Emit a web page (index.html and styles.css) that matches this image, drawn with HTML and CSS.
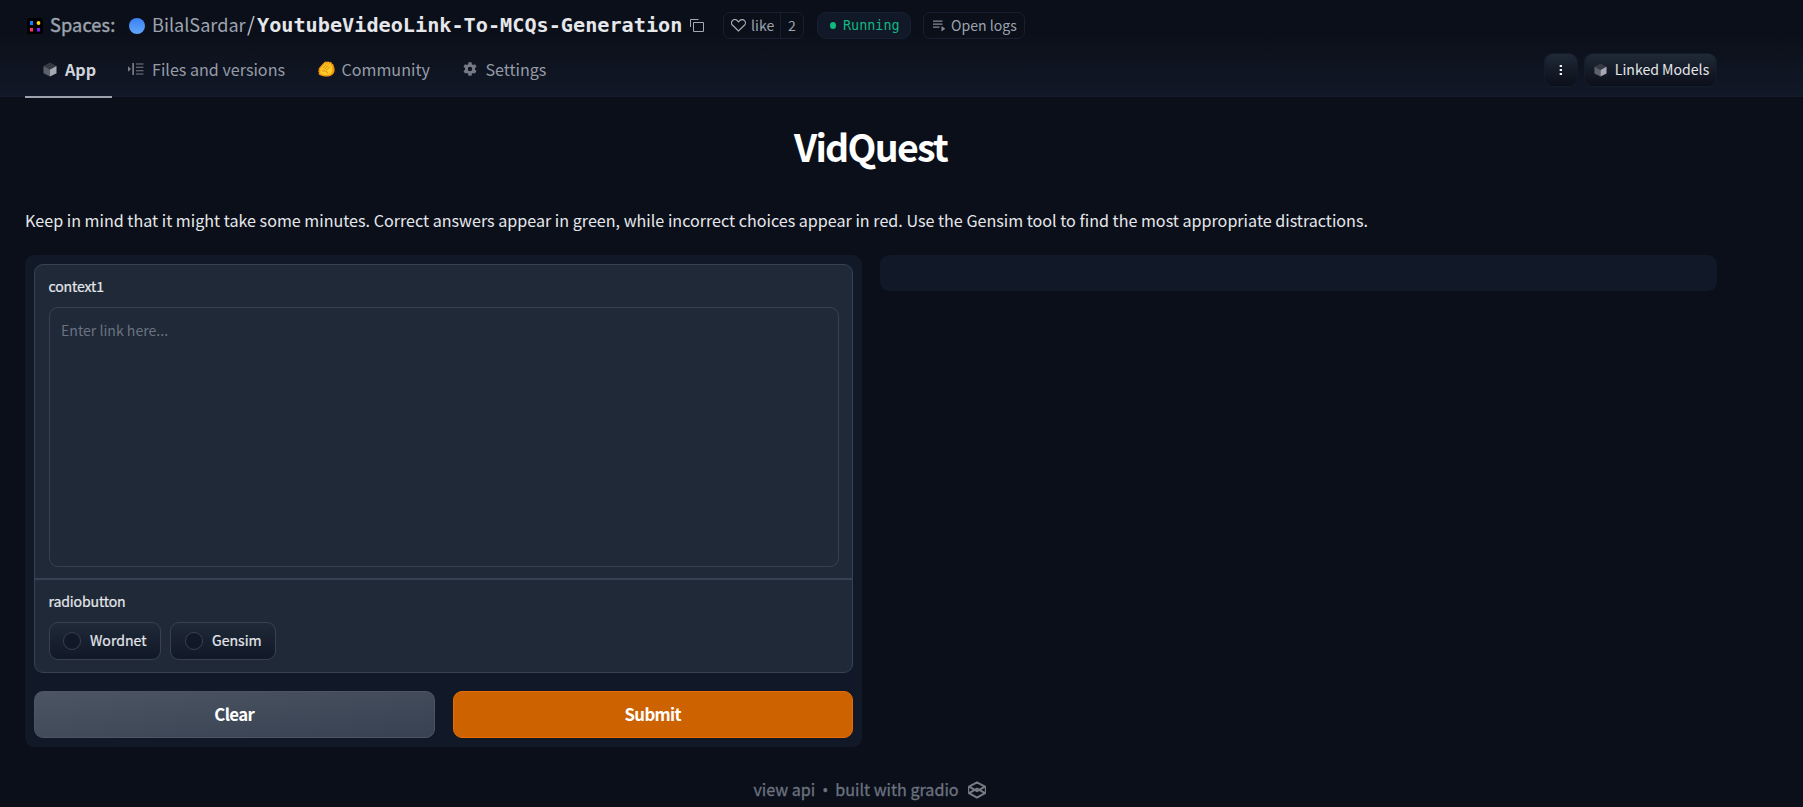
FILE: index.html
```
<!DOCTYPE html>
<html lang="en">
<head>
<meta charset="utf-8">
<title>VidQuest</title>
<link rel="stylesheet" href="styles.css">
</head>
<body>
<svg width="0" height="0" class="defs">
  <symbol id="cube" viewBox="0 0 14 15">
    <path fill="#353943" d="M7 .5 13.5 4 7 7.4.5 4z"/>
    <path fill="#5d616b" d="M.5 4 7 7.4v7.1L.5 11.2z"/>
    <path fill="#a5a9b2" d="M13.5 4 7 7.4v7.1l6.500-3.300z"/>
  </symbol>
</svg>
<header class="header">
  <div class="title-row">
    <svg class="spaces-icon" viewBox="0 0 16 16"><rect width="16" height="16" rx="2.500" fill="#000"/><rect x="3" y="3" width="3" height="4" fill="#0a84ff"/><circle cx="11.500" cy="5" r="1.900" fill="#ffd21e"/><rect x="3" y="10" width="3" height="3.500" fill="#ff3270"/><rect x="10" y="10" width="3" height="3.500" fill="#861fff"/></svg>
    <span class="spaces">Spaces:</span>
    <span class="avatar"></span>
    <span class="owner">BilalSardar</span>
    <span class="slash">/</span>
    <h1 class="repo">YoutubeVideoLink-To-MCQs-Generation</h1>
    <svg class="copy-icon" viewBox="0 0 14 14" fill="none" stroke="#a3a8b2"><path d="M3.500 3.500h10v9h-10z"/><path d="M.5 8V.5H8.500"/></svg>
    <div class="like"><span class="like-main"><svg class="heart" viewBox="0 0 15 13" fill="none" stroke="#a3a8b2" stroke-width="1.200"><path d="M7.500 12 1.600 6.300A3.300 3.300 0 0 1 6.200 1.500L7.500 2.800 8.800 1.500a3.300 3.300 0 0 1 4.600 4.800z"/></svg><span class="lift">like</span></span><span class="like-count lift">2</span></div>
    <div class="running"><span class="dot"></span>Running</div>
    <div class="logs"><svg class="logs-icon" viewBox="0 0 13 12" fill="#858a95"><path d="M0 .5h9.500v1.300H0zM0 3.500h9.500v1.200H0zM0 6.500h6.500v1.200H0zM8.500 6 12.300 8.800 8.500 11.500z"/></svg><span class="lift">Open logs</span></div>
  </div>
  <div class="nav-row">
    <nav class="tabs">
      <a class="tab active"><svg class="cube" viewBox="0 0 14 15"><use href="#cube"/></svg><span>App</span></a>
      <a class="tab files"><svg class="files-icon" viewBox="0 0 16 12" fill="#777c87"><path d="M0 3.300 3 6 0 8.700z"/><path fill="#a3a8b2" d="M4.500 0h1.200v12H4.500z"/><path d="M8 .5h7.500v1H8zM8 3.800h7.500v1H8zM8 7.200h7.500v1H8zM8 10.500h7.500v1H8z"/></svg><span>Files and versions</span></a>
      <a class="tab community"><svg class="hand" viewBox="0 0 17 16"><path fill="#f0930c" d="M2.300 5.400 6.200 1.300C7 .4 8.200.3 8.900.9 9.700.1 11 .3 11.600 1.200c1.200-.4 2.300.3 2.500 1.500 1.300.3 1.900 1.300 1.600 2.600 1.100 1.600 1.200 4 .6 5.800-.9 2.700-3.200 4-6 4.300-3.500.3-6.800-.2-9-1.700-.9-.7-.8-1.500-.2-2C0 11 0 9.900.7 9.400.2 8.100 1 6.700 2.300 5.400z"/><path fill="#ffc928" d="M3.200 6.300 6.700 2.500c.9-.9 2-.3 1.500.8l1.600-1.500c.9-.7 1.800 0 1.200 1l-1 1.500 2-1.500c.9-.5 1.600.3 1 1.100L11.600 5.800l1.800-1.100c.9-.4 1.500.4.9 1.200-.8 1.200.5 2.600.1 4.400-.6 2.500-2.200 3.600-4.800 3.800-2.600.2-5.300-.1-7.300-1.300-.5-.4 0-.8.600-.9-1-.6-1.300-1.300-.2-1.600-.9-1.300-.5-2.900.5-4z"/><path fill="none" stroke="#dd850f" stroke-width="1" stroke-linecap="round" d="M8 3.500 5 6.800M9.900 4.500 6.700 8M11.600 5.900 8.700 8.900M4.500 10c2.500-.8 4.500 0 5 2"/></svg><span>Community</span></a>
      <a class="tab settings"><svg class="gear" viewBox="0 0 14 14"><path fill="#747985" fill-rule="evenodd" d="M5.500.3h3l.4 1.900 1.200.7 1.900-.7 1.500 2.600-1.500 1.300v1.600l1.500 1.300-1.500 2.600-1.900-.6-1.200.7-.4 2h-3l-.4-2-1.200-.7-1.900.6L.5 9l1.500-1.300V6.100L.5 4.800 2 2.200l1.900.7 1.200-.7zM7 4.800a2.200 2.200 0 1 0 0 4.400 2.200 2.200 0 0 0 0-4.400z"/></svg><span>Settings</span></a>
    </nav>
    <div class="actions">
      <button class="btn-menu"><svg class="kebab" viewBox="0 0 4 12" fill="#f3f4f6"><rect x=".7" y="1" width="2.300" height="2"/><rect x=".7" y="5" width="2.300" height="2"/><rect x=".7" y="9" width="2.300" height="2"/></svg></button>
      <button class="btn-linked"><svg class="cube-sm" viewBox="0 0 14 15"><use href="#cube"/></svg><span class="lift">Linked Models</span></button>
    </div>
  </div>
</header>
<main class="main">
  <h2 class="heading">VidQuest</h2>
  <p class="intro">Keep in mind that it might take some minutes. Correct answers appear in green, while incorrect choices appear in red. Use the Gensim tool to find the most appropriate distractions.</p>
  <div class="columns">
    <section class="panel">
      <div class="form">
        <div class="block context">
          <label class="label" for="link">context1</label>
          <textarea class="input" id="link" placeholder="Enter link here..."></textarea>
        </div>
        <div class="block radios">
          <span class="label">radiobutton</span>
          <div class="options">
            <label class="option"><span class="radio"></span><span class="lift">Wordnet</span></label>
            <label class="option gensim"><span class="radio"></span><span class="lift">Gensim</span></label>
          </div>
        </div>
      </div>
      <div class="buttons">
        <button class="button clear"><span class="lift">Clear</span></button>
        <button class="button submit"><span class="lift">Submit</span></button>
      </div>
    </section>
    <section class="panel output"></section>
  </div>
  <footer class="footer"><span class="lift">view api</span><span class="sep">•</span><span class="lift">built with gradio</span><svg class="gradio" viewBox="0 0 20 18" fill="none" stroke="#777b84" stroke-width="2" stroke-linejoin="round"><path d="M10 1.300 18 5.700 10 10.200 2 5.700z"/><path d="M2 12.200 10 7.700l8 4.500-8 4.400z"/><path stroke-width="1.200" d="M1.600 6v6M18.400 6v6"/></svg></footer>
</main>
</body>
</html>
```
FILE: styles.css
```
* { box-sizing: border-box; }
body {
  margin: 0;
  min-height: 807px;
  overflow: hidden;
  background: #0b0f19;
  color: #e5e7eb;
  font: 16.11px/24px "Noto Sans CJK SC", "Open Sans", sans-serif;
}
h1, h2, p { margin: 0; }
button, textarea { font: inherit; }
svg { flex: none; display: block; }
.defs { position: absolute; }
/* Optical centring: the face sits low in its line box */
.lift { display: block; padding-bottom: 2px; }

/* Header */
.header {
  height: 97px;
  padding: 11px 86px 0 25px;
  background: linear-gradient(#0b0f19 35%, #111827);
  border-bottom: 1px solid #131b2c;
}
.title-row { display: flex; align-items: center; height: 29px; white-space: nowrap; }
.spaces-icon { width: 16px; height: 16px; margin-left: 2px; }
.spaces {
  width: 66px;
  margin-left: 7px;
  padding-bottom: 3px;
  font-size: 18.12px;
  letter-spacing: .15px;
  color: #9ca3af;
  -webkit-text-stroke: .4px #9ca3af;
}
.avatar { width: 16px; height: 16px; margin-left: 13px; border-radius: 50%; background: linear-gradient(#3b82f6, #60a5fa); }
.owner { width: 95px; margin-left: 7px; padding-bottom: 3px; font-size: 18.12px; color: #9ca3af; }
.slash { width: 10px; padding-bottom: 3px; font: 20px/24px "Noto Sans CJK SC", sans-serif; color: #c3c8d0; }
.repo { width: 425px; padding-bottom: 1px; font: 700 20.19px/24px "DejaVu Sans Mono", monospace; color: #e5e7eb; }
.copy-icon { width: 14px; height: 14px; margin-left: 8px; }
.like, .running, .logs {
  display: flex;
  align-items: center;
  height: 27px;
  border: 1px solid #171f30;
  border-radius: 7px;
  font-size: 14.1px;
  color: #9ca3af;
}
.like { width: 81px; margin-left: 19px; }
.like-main { display: flex; align-items: center; width: 57px; height: 100%; padding-left: 7px; border-right: 1px solid #171f30; }
.heart { width: 15px; height: 13px; margin-right: 5px; }
.like-count { flex: 1; text-align: center; }
.running {
  width: 94px;
  margin-left: 13px;
  padding-left: 12px;
  background: #111827;
  border-radius: 9px;
  font: 13.45px/18px "DejaVu Sans Mono", monospace;
  color: #10b981;
}
.dot { width: 6px; height: 7px; margin-right: 7px; border-radius: 50%; background: #10b981; }
.logs { width: 102px; margin-left: 12px; padding-left: 9px; }
.logs-icon { width: 13px; height: 12px; margin-right: 5px; }

.nav-row { display: flex; justify-content: space-between; height: 57px; margin-top: 1px; }
.tabs { display: flex; color: #969ba6; white-space: nowrap; }
.tab { display: flex; align-items: center; height: 57px; padding-bottom: 1px; }
.active { width: 87px; padding: 2px 0 1px 18px; color: #d1d5db; font-weight: 700; border-bottom: 2px solid #9ca3af; }
.cube { width: 14px; height: 15px; margin-right: 8px; }
.files { margin-left: 16px; }
.files-icon { width: 16px; height: 12px; margin-right: 8px; }
.community { margin-left: 32.500px; }
.hand { width: 17px; height: 16px; margin-right: 7px; }
.settings { margin-left: 33px; }
.gear { width: 14px; height: 14px; margin-right: 8.500px; }
.actions { display: flex; gap: 6px; padding-top: 12px; }
.btn-menu, .btn-linked {
  display: flex;
  align-items: center;
  justify-content: center;
  height: 34px;
  padding: 0;
  border: 1px solid #141c2b;
  border-radius: 9px;
  background: linear-gradient(#1f2937, #0b0f19);
  color: #e5e7eb;
  font-size: 14.1px;
  white-space: nowrap;
}
.btn-menu { width: 34px; }
.btn-linked { width: 133px; padding-left: 2px; }
.kebab { width: 4px; height: 12px; }
.cube-sm { width: 13px; height: 14px; margin-right: 8px; }

/* App content */
.main { padding: 0 86px 0 25px; }
.heading { padding: 25px 1px 0 0; text-align: center; font-size: 37.5px; line-height: 48px; letter-spacing: -1.7px; color: #fff; }
.intro { margin-top: 36px; line-height: 28px; white-space: nowrap; }
.columns { display: grid; grid-template-columns: 1fr 1fr; gap: 18px; align-items: start; margin-top: 21px; }
.panel { padding: 9px; border-radius: 9px; background: #111827; }
.output { height: 36px; }
.form { height: 409px; border: 1px solid #374151; border-radius: 9px; background: #1f2937; }
.block { padding: 9px 13px 0 14px; }
.context { height: 315px; border-bottom: 2px solid #374151; }
.label { display: block; height: 24px; margin-left: -.5px; color: #e5e7eb; font-size: 14.1px; line-height: 24px; letter-spacing: -.15px; -webkit-text-stroke: .2px #e5e7eb; }
.input {
  display: block;
  width: 100%;
  height: 260px;
  margin-top: 9px;
  padding: 10px 11px;
  border: 1px solid #374151;
  border-radius: 9px;
  outline: none;
  resize: none;
  background: #1f2937;
  font-size: 14.1px;
  line-height: 24px;
}
.input::placeholder { color: #6b7280; }
.options { display: flex; gap: 9px; margin-top: 9px; }
.option {
  display: flex;
  align-items: center;
  width: 112px;
  height: 38px;
  padding-left: 13px;
  border: 1px solid #374151;
  border-radius: 9px;
  background: linear-gradient(#1f2937, #111827);
  font-size: 14.1px;
  -webkit-text-stroke: .2px #e5e7eb;
}
.option.gensim { width: 106px; padding-left: 14px; }
.radio { width: 18px; height: 18px; margin-right: 9px; border: 1px solid #374151; border-radius: 50%; background: #111827; }
.buttons { display: grid; grid-template-columns: 1fr 1fr; gap: 18px; margin-top: 18px; }
.button { height: 47px; padding: 0; border: 1px solid #4b5563; border-radius: 9px; color: #fff; font-size: 16.8px; font-weight: 700; letter-spacing: -.65px; }
.clear { background: linear-gradient(to bottom right, #4b5563, #374151); }
.submit { border-color: #ea6c00; background: #cc6200; }
.footer { display: flex; align-items: center; justify-content: center; margin-top: 30px; padding-right: 2px; color: #6b7280; -webkit-text-stroke: .3px #6b7280; }
.sep { width: 20px; text-align: center; font-family: "Open Sans", sans-serif; }
.gradio { width: 20px; height: 18px; margin-left: 8px; }
```
